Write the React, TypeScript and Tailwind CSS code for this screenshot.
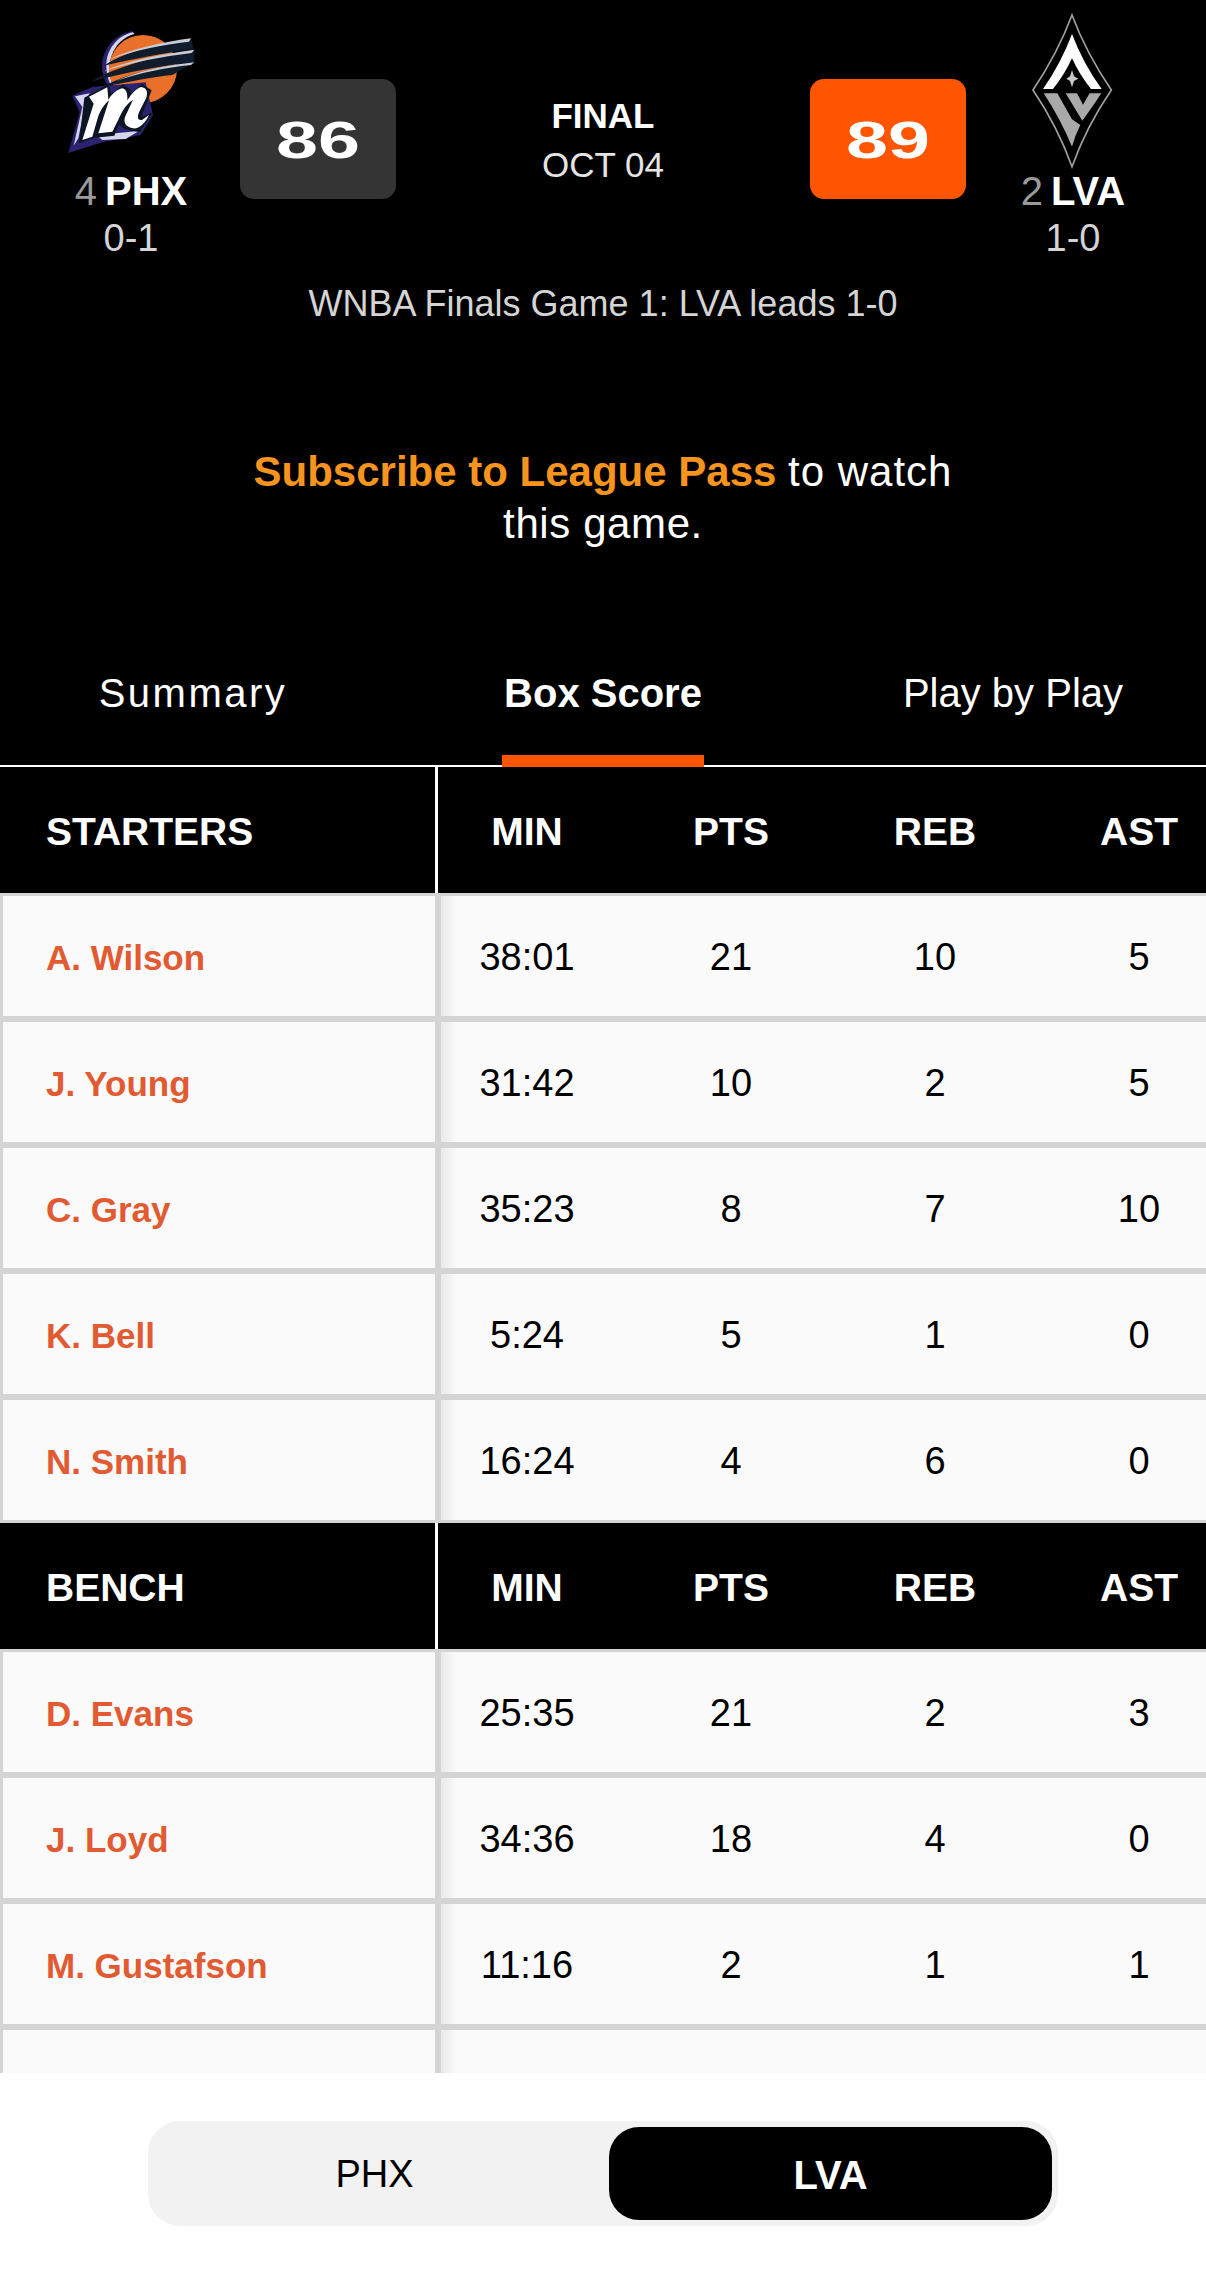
import { Fragment } from "react";

const sans = "font-['Liberation_Sans',Arial,sans-serif]";

type Row = { name: string; min: string; pts: number; reb: number; ast: number };

const starters: Row[] = [
  { name: "A. Wilson", min: "38:01", pts: 21, reb: 10, ast: 5 },
  { name: "J. Young", min: "31:42", pts: 10, reb: 2, ast: 5 },
  { name: "C. Gray", min: "35:23", pts: 8, reb: 7, ast: 10 },
  { name: "K. Bell", min: "5:24", pts: 5, reb: 1, ast: 0 },
  { name: "N. Smith", min: "16:24", pts: 4, reb: 6, ast: 0 },
];

const bench: Row[] = [
  { name: "D. Evans", min: "25:35", pts: 21, reb: 2, ast: 3 },
  { name: "J. Loyd", min: "34:36", pts: 18, reb: 4, ast: 0 },
  { name: "M. Gustafson", min: "11:16", pts: 2, reb: 1, ast: 1 },
];

function MercuryLogo() {
  return (
    <svg width="145" height="135" viewBox="0 0 435 405">
      {/* crescent behind the ball */}
      <path d="M220 18 C160 30 125 80 130 135 C132 155 138 170 146 182 L160 178 C146 150 142 120 152 90 C164 55 190 32 225 24Z" fill="#2c2370" />
      <path d="M222 22 C170 34 140 78 142 128 C143 146 147 162 154 178 L160 176 C150 150 148 120 158 92 C170 58 194 36 226 27Z" fill="#d5d6ee" />
      <circle cx="252" cy="132" r="102" fill="#e8702a" />
      {/* streaks */}
      <path d="M135 122 C200 80 300 55 396 40 L404 72 C320 84 230 100 135 122Z" fill="#0f1c2b" />
      <path d="M150 104 C220 70 310 52 396 40 L390 50 C310 60 230 74 150 104Z" fill="#c9ccd6" />
      <path d="M95 170 C180 120 300 92 406 74 L406 112 C320 120 210 140 95 170Z" fill="#0f1c2b" />
      <path d="M130 140 C210 104 310 88 406 74 L398 84 C310 94 220 112 130 140Z" fill="#c9ccd6" />
      <path d="M130 186 C210 142 320 122 406 112 L340 150 C280 156 210 170 130 186Z" fill="#0f1c2b" />
      <path d="M172 168 C240 136 330 120 406 112 L396 120 C320 128 240 144 172 168Z" fill="#c9ccd6" />
      {/* m: purple shadow, dark outline, white face */}
      <path d="M40 212 L100 186 L260 172 L282 270 L245 330 L130 352 L28 384 L62 262Z" fill="#2c2370" />
      <path d="M48 214 L92 205 L82 222 L58 340 L44 362 L70 246Z" fill="#d5d6ee" />
      <path d="M112 330 L240 318 L200 342 L130 345Z" fill="#d5d6ee" />
      <path d="M76 218 L150 176 L156 208 L192 178 L214 194 L216 206 L248 176 L278 196 L252 262 L250 276 L284 260 L242 322 L196 312 L180 298 L166 332 L108 338 L60 355Z" fill="#0b1622" />
      <path d="M90 215 L145 187 L148 224 C160 205 176 192 190 190 C202 192 206 204 205 226 C218 206 232 190 246 186 C262 188 268 200 262 218 L240 262 C234 278 236 288 250 284 L270 270 C258 296 240 312 222 310 C202 306 192 294 198 276 L222 224 C206 234 192 252 180 280 L160 320 L118 325 L150 226 C134 240 124 256 116 280 L100 335 L70 345 L104 236Z" fill="#ffffff" />
    </svg>
  );
}

function AcesLogo() {
  return (
    <svg width="100" height="160" viewBox="0 0 300 480">
      <path d="M147 15 Q190 130 265 240 Q190 350 147 470 Q104 350 30 240 Q104 130 147 15Z" fill="none" stroke="#a0a0a0" strokeWidth="5" />
      <path d="M147 72 Q180 160 236 237 L204 237 Q170 195 147 145 Q124 195 90 237 L60 237 Q114 160 147 72Z" fill="#ffffff" />
      <path d="M147 180 L153 199 L166 206 L153 213 L147 232 L141 213 L130 206 L141 199Z" fill="#c8c8c8" />
      <path d="M62 250 L103 250 L147 328 L172 345 Q156 376 147 410 Q112 326 62 250Z" fill="#a9a9a9" />
      <path d="M128 250 L162 250 L180 284 L200 250 L235 250 Q205 296 178 332Z" fill="#a9a9a9" />
    </svg>
  );
}

function TeamBlock({ seed, abbr, record }: { seed: number; abbr: string; record: string }) {
  return (
    <div className={`flex flex-col items-center ${sans}`}>
      <div className="flex h-[38px] items-center text-[40px] leading-none">
        <span className="mr-[8px] font-normal text-[#9a9a9a]">{seed}</span>
        <span className="font-bold text-white">{abbr}</span>
      </div>
      <div className="mt-[9px] text-[38px] leading-none text-[#d4d4d4]">{record}</div>
    </div>
  );
}

function StatCells({ values }: { values: (string | number)[] }) {
  return (
    <div className="flex gap-[26px]">
      {values.map((value, i) => (
        <div key={i} className="w-[178px] shrink-0 text-center">
          {value}
        </div>
      ))}
    </div>
  );
}

function HeadRow({ label }: { label: string }) {
  return (
    <div className="flex h-[126px] items-center bg-black pt-[4px] text-[39px] font-bold text-white">
      <div className="-mt-[4px] flex h-[126px] w-[438px] shrink-0 items-center border-r-[3px] border-white pt-[4px] pl-[46px]">
        {label}
      </div>
      <StatCells values={["MIN", "PTS", "REB", "AST"]} />
    </div>
  );
}

function PlayerRow({ row }: { row?: Row }) {
  return (
    <div className="flex h-[126px] border-y-[3px] border-[#d4d4d4] bg-[linear-gradient(90deg,#fafafa_441px,#e9e9e9_441px,#fafafa_456px)] text-[38px] text-black">
      <div className="flex h-full w-[441px] shrink-0 items-center border-x-[3px] border-r-[6px] border-[#d4d4d4] pt-[4px] pl-[43px] text-[35px] font-bold text-[#e25a32]">
        {row?.name}
      </div>
      <div className="-ml-[3px] flex items-center pt-[3px]">
        {row ? <StatCells values={[row.min, row.pts, row.reb, row.ast]} /> : null}
      </div>
    </div>
  );
}

function Section({ label, rows }: { label: string; rows: Row[] }) {
  return (
    <Fragment>
      <HeadRow label={label} />
      {rows.map((row) => (
        <PlayerRow key={row.name} row={row} />
      ))}
    </Fragment>
  );
}

export default function App() {
  return (
    <div className={`flex h-[2284px] w-[1206px] flex-col overflow-hidden bg-white ${sans}`}>
      <div className="bg-black">
        <div className="flex h-[260px] items-start">
          <div className="flex w-[240px] flex-col items-center pt-[25px] pl-[22px]">
            <div className="mb-[12px] h-[135px]">
              <MercuryLogo />
            </div>
            <TeamBlock seed={4} abbr="PHX" record="0-1" />
          </div>
          <div className="mt-[79px] flex h-[120px] w-[156px] items-center justify-center rounded-[14px] bg-[#343434] pt-[2px]">
            <span className="scale-x-[1.45] text-[52px] font-bold text-white">86</span>
          </div>
          <div className="flex w-[414px] flex-col items-center pt-[96px] text-white">
            <div className="text-[35px] leading-[40px] font-bold">FINAL</div>
            <div className="mt-[9px] text-[35px] leading-[40px] text-[#e4e4e4]">OCT 04</div>
          </div>
          <div className="mt-[79px] flex h-[120px] w-[156px] items-center justify-center rounded-[14px] bg-[#ff5500] pt-[2px]">
            <span className="scale-x-[1.45] text-[52px] font-bold text-white">89</span>
          </div>
          <div className="flex w-[240px] flex-col items-center pt-[10px] pr-[26px]">
            <div className="mb-[2px] h-[160px]">
              <AcesLogo />
            </div>
            <TeamBlock seed={2} abbr="LVA" record="1-0" />
          </div>
        </div>
        <div className="mt-[24px] text-center text-[36px] leading-[40px] text-[#d4d4d4]">
          WNBA Finals Game 1: LVA leads 1-0
        </div>
        <div className="mt-[122px] text-center text-[42px] leading-[52px] text-white">
          <span className="font-bold text-[#f7941d]">Subscribe to League Pass</span>{" "}
          <span className="tracking-[1px]">to watch</span>
          <br />
          <span className="tracking-[0.6px]">this game.</span>
        </div>
        <div className="mt-[92px] flex h-[125px] justify-between border-b-2 border-white text-[40px] text-white">
          <div className="w-[386px] pt-[21px] text-center tracking-[2.5px]">Summary</div>
          <div className="relative w-[202px] pt-[21px] text-center font-bold">
            Box Score
            <div className="absolute -bottom-[2px] left-0 h-[12px] w-full bg-[#ff5500]" />
          </div>
          <div className="w-[386px] pt-[21px] text-center">Play by Play</div>
        </div>
      </div>

      <div className="h-[1306px] shrink-0 overflow-hidden">
        <Section label="STARTERS" rows={starters} />
        <Section label="BENCH" rows={bench} />
        <PlayerRow />
      </div>

      <div className="flex flex-1 justify-center pt-[48px]">
        <div className="flex h-[105px] w-[910px] items-center rounded-[32px] bg-[#f2f2f2] pr-[6px] text-[38px] text-black">
          <div className="flex-1 pr-[8px] pt-[2px] text-center">PHX</div>
          <div className="flex h-[93px] w-[443px] items-center justify-center rounded-[30px] bg-black pt-[2px] text-[40px] font-bold text-white">
            LVA
          </div>
        </div>
      </div>
    </div>
  );
}
